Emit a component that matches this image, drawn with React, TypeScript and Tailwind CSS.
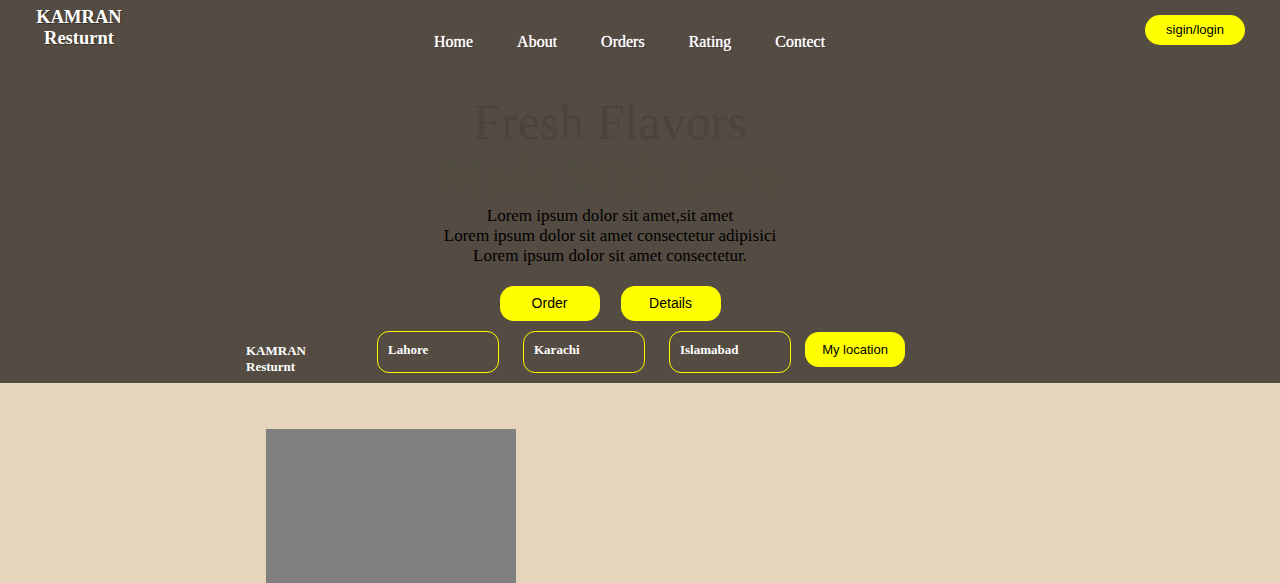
const serif = "font-['Liberation_Serif','Times_New_Roman',serif]";
const sans = "font-['Liberation_Sans',Arial,sans-serif]";

const nav = ["Home", "About", "Orders", "Rating", "Contect"];
const cities = ["Lahore", "Karachi", "Islamabad"];

export default function App() {
  return (
    <div className="h-[583px] w-full overflow-hidden bg-[#e6d4bc]">
      <section className="h-[383px] bg-[#544c43]">
        <header className="flex items-start px-9 pt-[7px]">
          <div
            className={`${serif} w-[86px] text-center text-[18.5px] font-bold leading-[21px] text-white [text-shadow:1px_1px_1px_rgba(0,0,0,0.4)]`}
          >
            KAMRAN
            <br />
            Resturnt
          </div>
          <nav className="ml-[312px] mt-[23px] flex gap-[44px]">
            {nav.map((n) => (
              <a
                key={n}
                className={`${serif} text-[16px] text-white [text-shadow:0_0_1px_#fff,1px_1px_1px_rgba(0,0,0,0.4)]`}
              >
                {n}
              </a>
            ))}
          </nav>
          <button
            className={`${sans} ml-auto mr-[-1px] mt-[8px] h-[30px] w-[100px] rounded-full bg-[#ffff00] text-[13px] text-black`}
          >
            sigin/login
          </button>
        </header>

        <div className={`${serif} mx-auto mt-[42px] flex w-[400px] translate-x-[-30px] flex-col items-center text-center`}>
          <h1 className="text-[50px] leading-[52px] text-[#4a443c]">Fresh Flavors</h1>
          <h2 className="text-[50px] leading-[56px] text-[#504c3e]">Made With Love</h2>
          <p className="mt-[2px] w-[420px] text-[17px] leading-[20px] text-black">
            Lorem ipsum dolor sit amet,sit amet
            <br />
            Lorem ipsum dolor sit amet consectetur adipisici
            <br />
            Lorem ipsum dolor sit amet consectetur.
          </p>
          <div className="mt-[20px] flex gap-[21px]">
            <button className={`${sans} h-[35px] w-[100px] rounded-[14px] bg-[#ffff00] text-[14px] text-black`}>
              Order
            </button>
            <button className={`${sans} h-[35px] w-[100px] rounded-[14px] bg-[#ffff00] text-[14px] text-black`}>
              Details
            </button>
          </div>
        </div>

        <div className="ml-[246px] mt-[10px] flex items-start">
          <div className={`${serif} mt-[12px] w-[131px] text-[13px] font-bold leading-[16px] text-white`}>
            KAMRAN
            <br />
            Resturnt
          </div>
          <div className="flex gap-[24px]">
            {cities.map((c) => (
              <div
                key={c}
                className={`${serif} h-[42px] w-[122px] rounded-[12px] border border-[#ffff00] px-[10px] pt-[10px] text-[13px] font-bold leading-[16px] text-white`}
              >
                {c}
              </div>
            ))}
          </div>
          <button
            className={`${sans} ml-[14px] mt-[1px] h-[35px] w-[100px] rounded-[14px] bg-[#ffff00] text-[13px] text-black`}
          >
            My location
          </button>
        </div>
      </section>

      <section className="pl-[266px] pt-[46px]">
        <div className="h-[154px] w-[250px] bg-[#808080]" />
      </section>
    </div>
  );
}
